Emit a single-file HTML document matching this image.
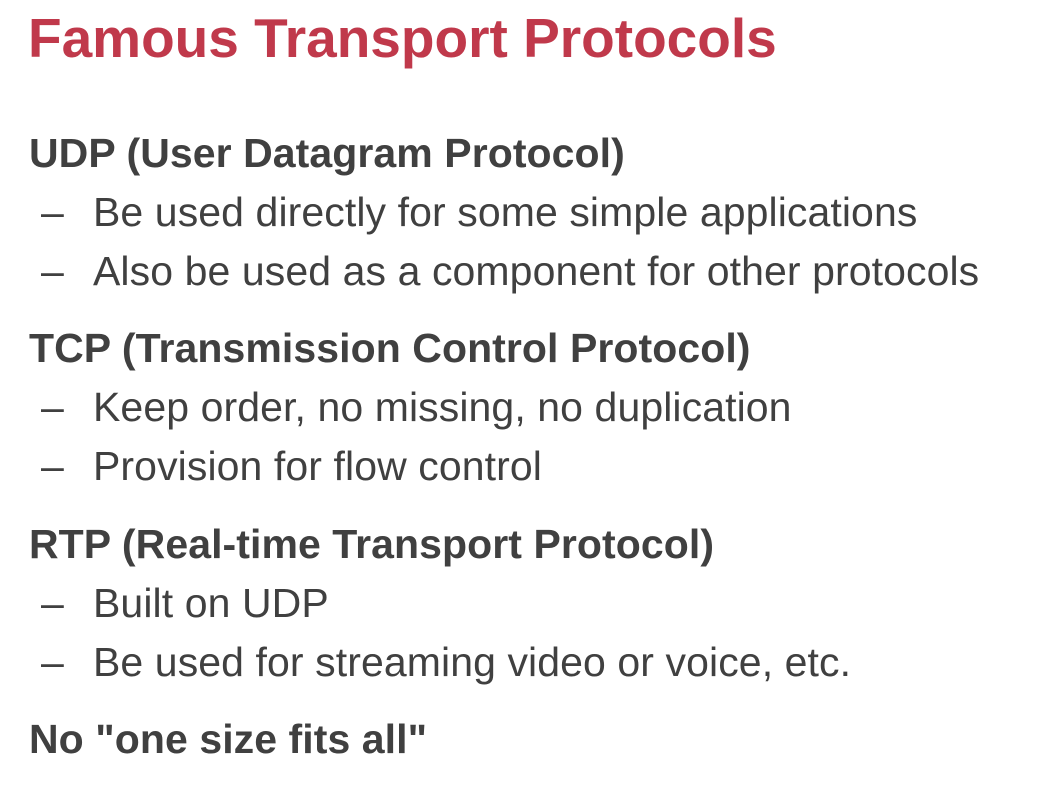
<!DOCTYPE html>
<html><head><style>
body{margin:0;width:1058px;height:792px;background:#fff;position:relative;overflow:hidden;font-family:"Liberation Sans",sans-serif;}
div{position:absolute;line-height:1;white-space:nowrap;color:#404040;}
.t{font-size:55px;font-weight:bold;color:#c0394b;left:28px;top:11px;}
.h{font-size:41px;font-weight:bold;left:29px;letter-spacing:0.07px;}
.b{font-size:41px;left:93px;letter-spacing:0.09px;}
.d{font-size:41px;left:41px;}
</style></head><body>
<div class="t">Famous Transport Protocols</div>
<div class="h" style="top:133px">UDP (User Datagram Protocol)</div>
<div class="d" style="top:192px">–</div><div class="b" style="top:192px">Be used directly for some simple applications</div>
<div class="d" style="top:251px">–</div><div class="b" style="top:251px">Also be used as a component for other protocols</div>
<div class="h" style="top:328px">TCP (Transmission Control Protocol)</div>
<div class="d" style="top:387px">–</div><div class="b" style="top:387px">Keep order, no missing, no duplication</div>
<div class="d" style="top:446px">–</div><div class="b" style="top:446px">Provision for flow control</div>
<div class="h" style="top:524px">RTP (Real-time Transport Protocol)</div>
<div class="d" style="top:583px">–</div><div class="b" style="top:583px">Built on UDP</div>
<div class="d" style="top:642px">–</div><div class="b" style="top:642px">Be used for streaming video or voice, etc.</div>
<div class="h" style="top:719px">No "one size fits all"</div>
</body></html>
